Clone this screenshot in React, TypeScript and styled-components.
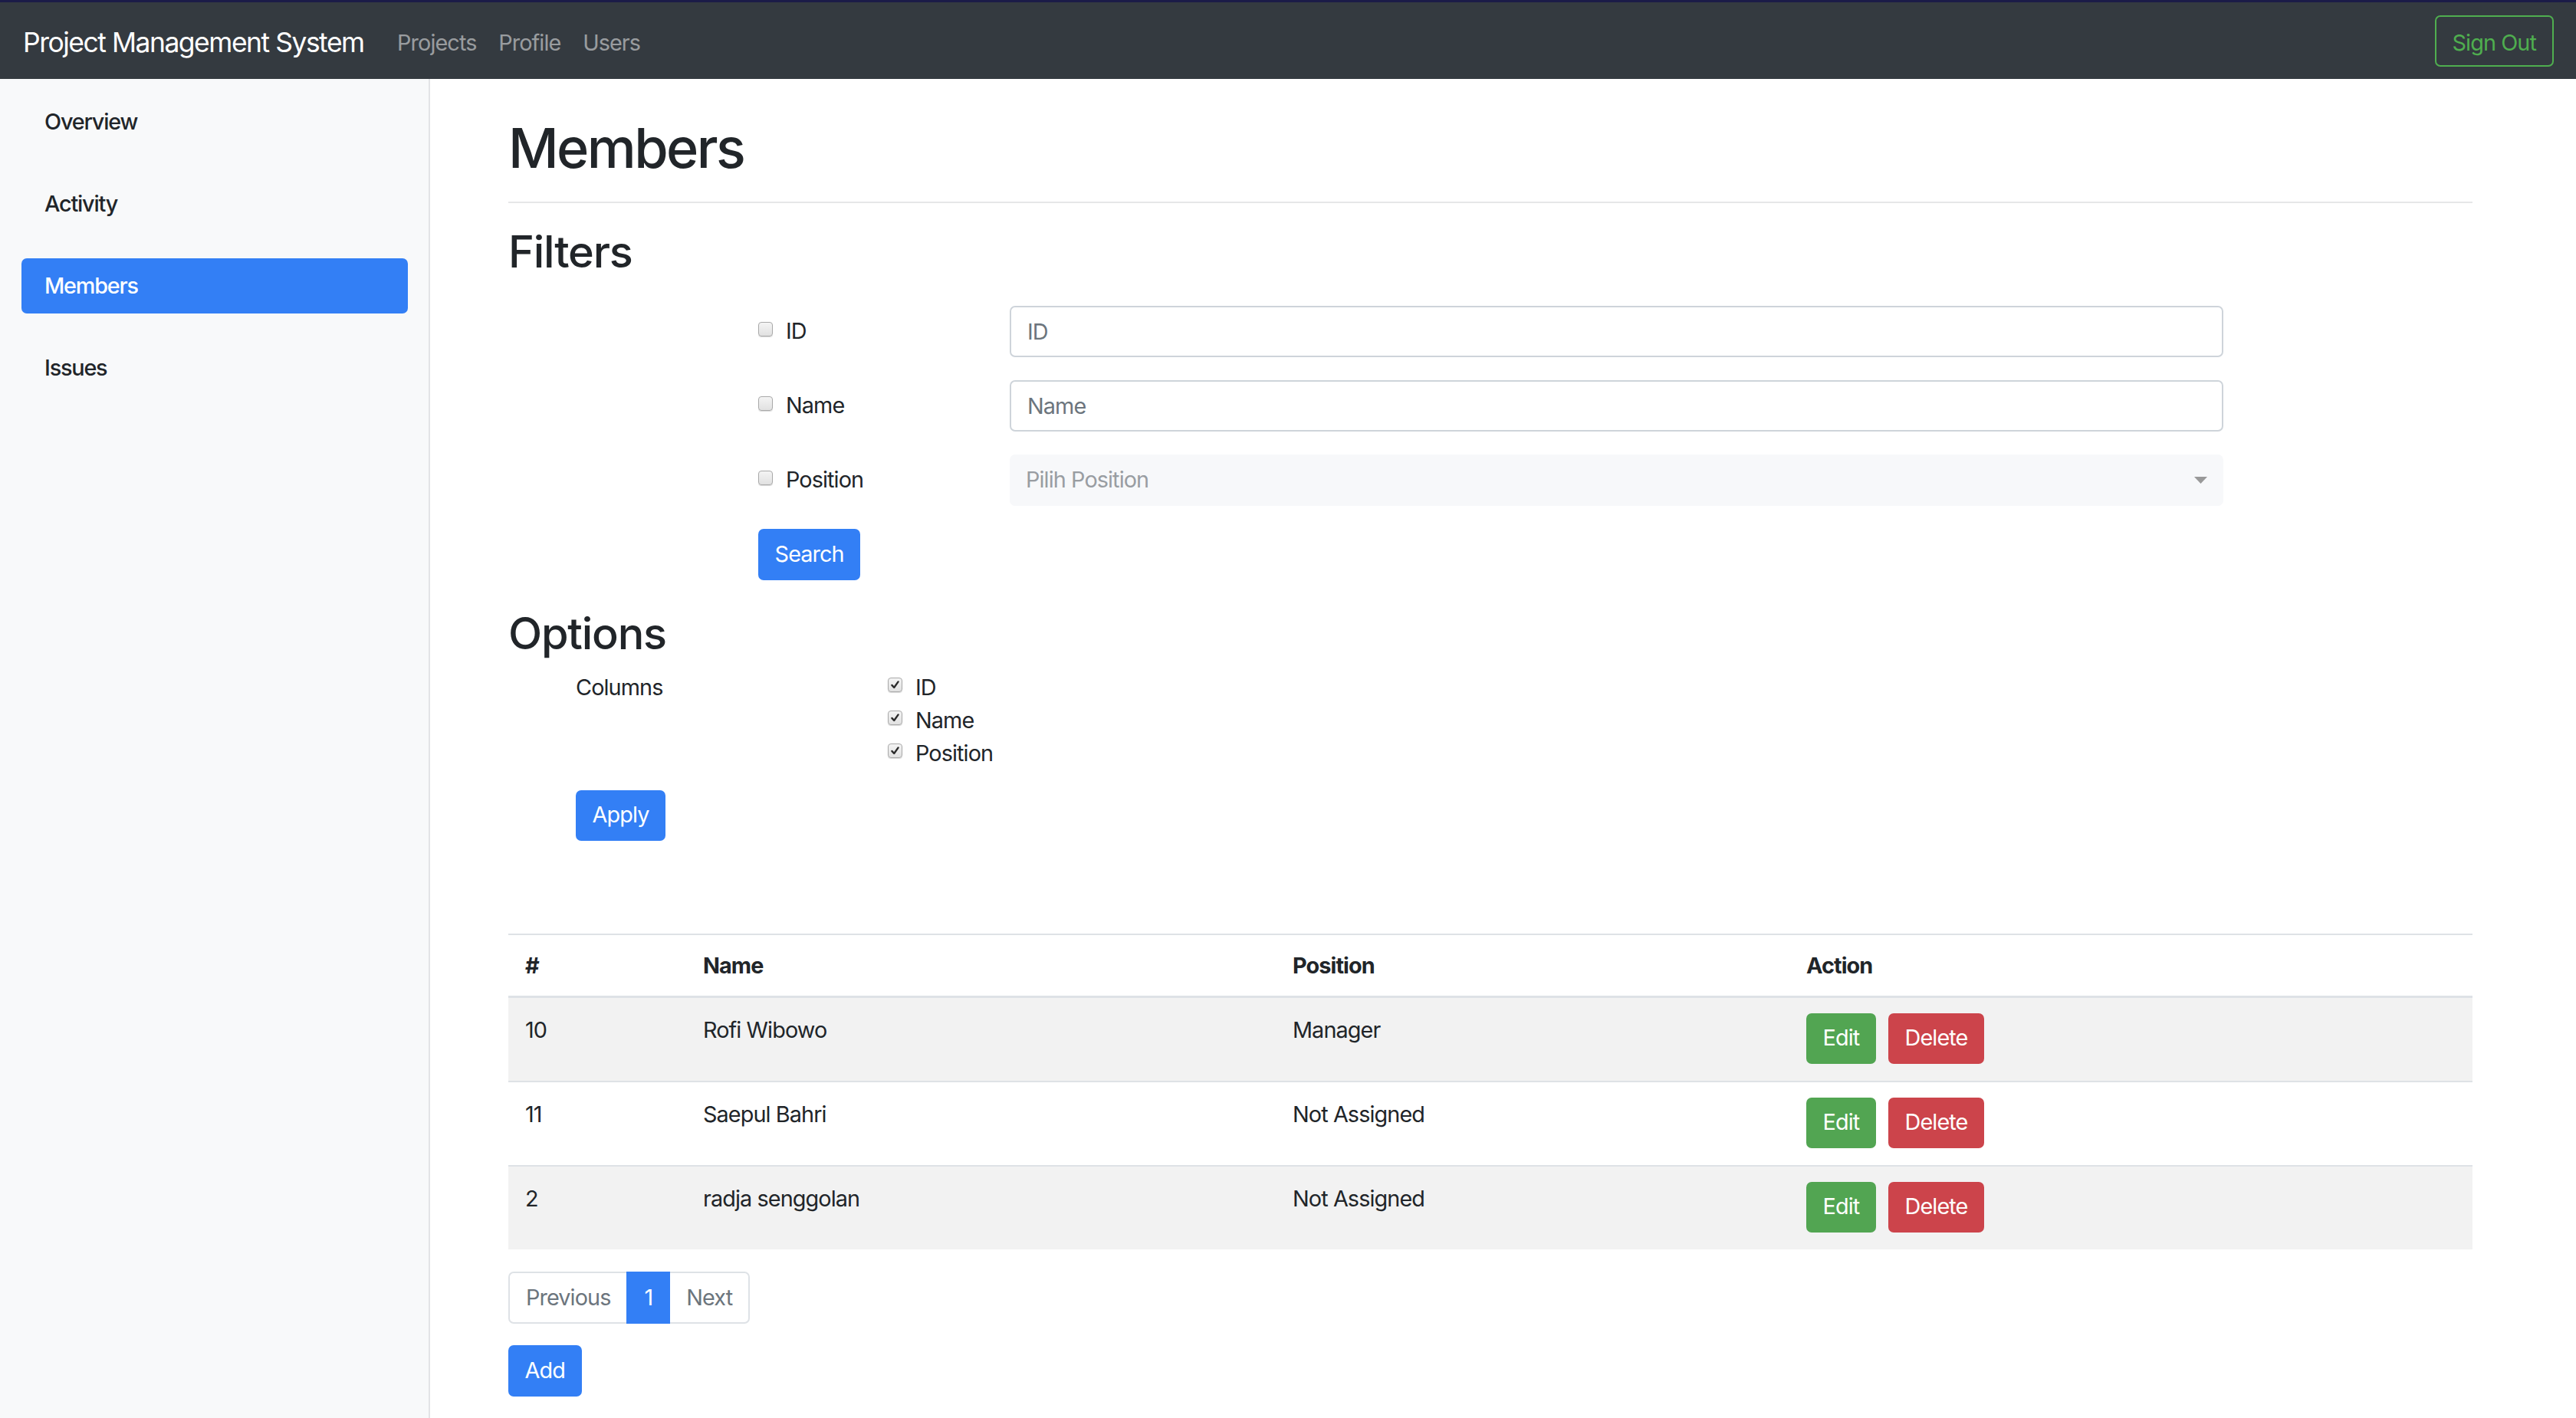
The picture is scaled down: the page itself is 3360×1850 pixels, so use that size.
import React from "react";
import styled, { createGlobalStyle } from "styled-components";

const GlobalStyle = createGlobalStyle`
  html, body {
    margin: 0;
    padding: 0;
  }
  body {
    font-family: Inter, "Liberation Sans", sans-serif;
    font-size: 28.8px;
    line-height: 1.5;
    letter-spacing: -0.9px;
    color: #212529;
    background: #fff;
  }
  * {
    box-sizing: border-box;
  }
`;

const BLUE = "#337ff5";
const GREEN = "#52a552";
const RED = "#cc444b";

const Page = styled.div`
  min-height: 100vh;
  display: flex;
  flex-direction: column;
  border-top: 3px solid #1b1b48;
`;

const Navbar = styled.nav`
  height: 100px;
  flex-shrink: 0;
  background: #343a40;
  display: flex;
  align-items: center;
  padding: 1px 29px 0 30px;
`;

const Brand = styled.a`
  font-size: 35.5px;
  color: #fff;
  margin-right: 29px;
  padding-top: 5px;
  letter-spacing: -1.5px;
`;

const NavLinks = styled.div`
  display: flex;
  flex: 1;
  padding-top: 5px;
`;

const NavLink = styled.a`
  padding: 0 14.4px;
  color: rgba(255, 255, 255, 0.5);
`;

const OutlineButton = styled.button`
  height: 67px;
  padding: 4px 21px 0;
  border: 2px solid #4fae4f;
  border-radius: 7px;
  background: transparent;
  color: #4fae4f;
  font: inherit;
  letter-spacing: inherit;
`;

const Body = styled.div`
  flex: 1;
  display: flex;
`;

const Sidebar = styled.aside`
  width: 561px;
  flex-shrink: 0;
  background: #f8f9fa;
  border-right: 2px solid #e3e4e6;
  padding: 20px 27px 0 28px;
  display: flex;
  flex-direction: column;
  gap: 35px;
`;

const SideLink = styled.a<{ $active?: boolean }>`
  height: 72px;
  display: flex;
  align-items: center;
  padding: 0 30px;
  border-radius: 7px;
  font-weight: 500;
  letter-spacing: -1.2px;
  color: ${(p) => (p.$active ? "#fff" : "#212529")};
  background: ${(p) => (p.$active ? BLUE : "transparent")};
`;

const Main = styled.main`
  flex: 1;
  padding: 47px 135px 40px 102px;
`;

const PageHeader = styled.div`
  border-bottom: 2px solid #e6e7e8;
  padding-bottom: 27px;
  margin-bottom: 29px;
`;

const Title = styled.h1`
  margin: 0;
  font-size: 72px;
  font-weight: 500;
  line-height: 1.2;
  letter-spacing: -2.6px;
`;

const SectionTitle = styled.h2<{ $top?: number }>`
  margin: ${(p) => p.$top ?? 0}px 0 14px;
  font-size: 57.6px;
  font-weight: 500;
  line-height: 1.2;
  letter-spacing: -1.2px;
`;

const FilterForm = styled.form`
  padding-top: 21px;
`;

const FilterRow = styled.div`
  display: grid;
  grid-template-columns: 328px 1583px;
  align-items: center;
  height: 67px;
  margin: 0 0 30px 326px;
`;

const CheckLabel = styled.label`
  display: flex;
  align-items: center;
  gap: 17px;
  height: 43px;
`;

const CheckBox = styled.span`
  width: 19px;
  height: 19px;
  margin-bottom: 6px;
  flex-shrink: 0;
  display: flex;
  align-items: center;
  justify-content: center;
  border: 1px solid #a9a9a9;
  border-radius: 4px;
  background: linear-gradient(#f4f4f4, #e1e1e1);
  box-shadow: 0 1px 1px rgba(0, 0, 0, 0.15);
`;

const TextInput = styled.input`
  width: 100%;
  height: 67px;
  border: 2px solid #ced4da;
  border-radius: 7px;
  padding: 0 21px;
  font: inherit;
  letter-spacing: inherit;
  color: #495057;
  &::placeholder {
    color: #6c757d;
  }
`;

const SelectBox = styled.div`
  height: 67px;
  display: flex;
  align-items: center;
  justify-content: space-between;
  padding: 0 21px;
  border-radius: 7px;
  background: #f7f8fa;
  color: #999da2;
`;

const ButtonRow = styled.div<{ $left: number; $top?: number }>`
  margin: ${(p) => p.$top ?? 0}px 0 0 ${(p) => p.$left}px;
`;

const Button = styled.button<{ $color: string; $height?: number }>`
  height: ${(p) => p.$height ?? 67}px;
  padding: 0 21.6px;
  border: none;
  border-radius: 7px;
  background: ${(p) => p.$color};
  color: #fff;
  font: inherit;
  letter-spacing: inherit;
  line-height: 1;
`;

const OptionsGrid = styled.div`
  display: grid;
  grid-template-columns: 407px auto;
  margin-left: 88px;
  line-height: 43px;
`;

const CheckList = styled.div`
  display: flex;
  flex-direction: column;
`;

const Table = styled.table`
  width: 100%;
  margin-top: 121px;
  border-collapse: collapse;
  table-layout: fixed;
`;

const Th = styled.th<{ $width: number }>`
  width: ${(p) => p.$width}px;
  text-align: left;
  font-weight: 700;
  line-height: 43px;
  padding: 18px 22px;
  border-top: 2px solid #dee2e6;
  border-bottom: 3px solid #dee2e6;
`;

const Tr = styled.tr<{ $striped: boolean }>`
  background: ${(p) => (p.$striped ? "#f2f2f2" : "transparent")};
`;

const Td = styled.td`
  vertical-align: top;
  line-height: 43px;
  padding: 20px 22px 22px;
  border-top: 2px solid #dee2e6;
`;

const Actions = styled.div`
  display: flex;
  gap: 16px;
`;

const Pager = styled.ul`
  display: flex;
  margin: 29px 0 0;
  padding: 0;
  list-style: none;
`;

const PageItem = styled.li<{ $active?: boolean }>`
  height: 68px;
  display: flex;
  align-items: center;
  padding: 0 21px;
  margin-left: -2px;
  border: 2px solid ${(p) => (p.$active ? BLUE : "#dee2e6")};
  background: ${(p) => (p.$active ? BLUE : "#fff")};
  color: ${(p) => (p.$active ? "#fff" : "#6c757d")};
  z-index: ${(p) => (p.$active ? 1 : 0)};
  &:first-child {
    margin-left: 0;
    border-radius: 7px 0 0 7px;
  }
  &:last-child {
    border-radius: 0 7px 7px 0;
  }
`;

function Check({ checked }: { checked?: boolean }) {
  return (
    <CheckBox>
      {checked && (
        <svg width="13" height="13" viewBox="0 0 12 12">
          <path
            d="M2.2 6.4 L4.8 9.2 L9.8 2.2"
            fill="none"
            stroke="#2b2b2b"
            strokeWidth="2.2"
            strokeLinecap="round"
            strokeLinejoin="round"
          />
        </svg>
      )}
    </CheckBox>
  );
}

const members = [
  { id: 10, name: "Rofi Wibowo", position: "Manager" },
  { id: 11, name: "Saepul Bahri", position: "Not Assigned" },
  { id: 2, name: "radja senggolan", position: "Not Assigned" },
];

export default function App() {
  return (
    <>
      <GlobalStyle />
      <Page>
        <Navbar>
          <Brand>Project Management System</Brand>
          <NavLinks>
            <NavLink>Projects</NavLink>
            <NavLink>Profile</NavLink>
            <NavLink>Users</NavLink>
          </NavLinks>
          <OutlineButton>Sign Out</OutlineButton>
        </Navbar>

        <Body>
          <Sidebar>
            <SideLink>Overview</SideLink>
            <SideLink>Activity</SideLink>
            <SideLink $active>Members</SideLink>
            <SideLink>Issues</SideLink>
          </Sidebar>

          <Main>
            <PageHeader>
              <Title>Members</Title>
            </PageHeader>

            <SectionTitle>Filters</SectionTitle>
            <FilterForm onSubmit={(e) => e.preventDefault()}>
              <FilterRow>
                <CheckLabel>
                  <Check />
                  ID
                </CheckLabel>
                <TextInput placeholder="ID" />
              </FilterRow>
              <FilterRow>
                <CheckLabel>
                  <Check />
                  Name
                </CheckLabel>
                <TextInput placeholder="Name" />
              </FilterRow>
              <FilterRow>
                <CheckLabel>
                  <Check />
                  Position
                </CheckLabel>
                <SelectBox>
                  <span>Pilih Position</span>
                  <svg width="17" height="9" viewBox="0 0 17 9">
                    <polygon points="0,0 17,0 8.5,9" fill="#999" />
                  </svg>
                </SelectBox>
              </FilterRow>
              <ButtonRow $left={326}>
                <Button $color={BLUE}>Search</Button>
              </ButtonRow>
            </FilterForm>

            <SectionTitle $top={35}>Options</SectionTitle>
            <OptionsGrid>
              <div>Columns</div>
              <CheckList>
                <CheckLabel>
                  <Check checked />
                  ID
                </CheckLabel>
                <CheckLabel>
                  <Check checked />
                  Name
                </CheckLabel>
                <CheckLabel>
                  <Check checked />
                  Position
                </CheckLabel>
              </CheckList>
            </OptionsGrid>
            <ButtonRow $left={88} $top={27}>
              <Button $color={BLUE} $height={66}>
                Apply
              </Button>
            </ButtonRow>

            <Table>
              <thead>
                <tr>
                  <Th $width={232}>#</Th>
                  <Th $width={769}>Name</Th>
                  <Th $width={670}>Position</Th>
                  <Th $width={891}>Action</Th>
                </tr>
              </thead>
              <tbody>
                {members.map((m, i) => (
                  <Tr key={m.id} $striped={i % 2 === 0}>
                    <Td>{m.id}</Td>
                    <Td>{m.name}</Td>
                    <Td>{m.position}</Td>
                    <Td>
                      <Actions>
                        <Button $color={GREEN} $height={66}>
                          Edit
                        </Button>
                        <Button $color={RED} $height={66}>
                          Delete
                        </Button>
                      </Actions>
                    </Td>
                  </Tr>
                ))}
              </tbody>
            </Table>

            <Pager>
              <PageItem>Previous</PageItem>
              <PageItem $active>1</PageItem>
              <PageItem>Next</PageItem>
            </Pager>
            <ButtonRow $left={0} $top={28}>
              <Button $color={BLUE}>Add</Button>
            </ButtonRow>
          </Main>
        </Body>
      </Page>
    </>
  );
}
